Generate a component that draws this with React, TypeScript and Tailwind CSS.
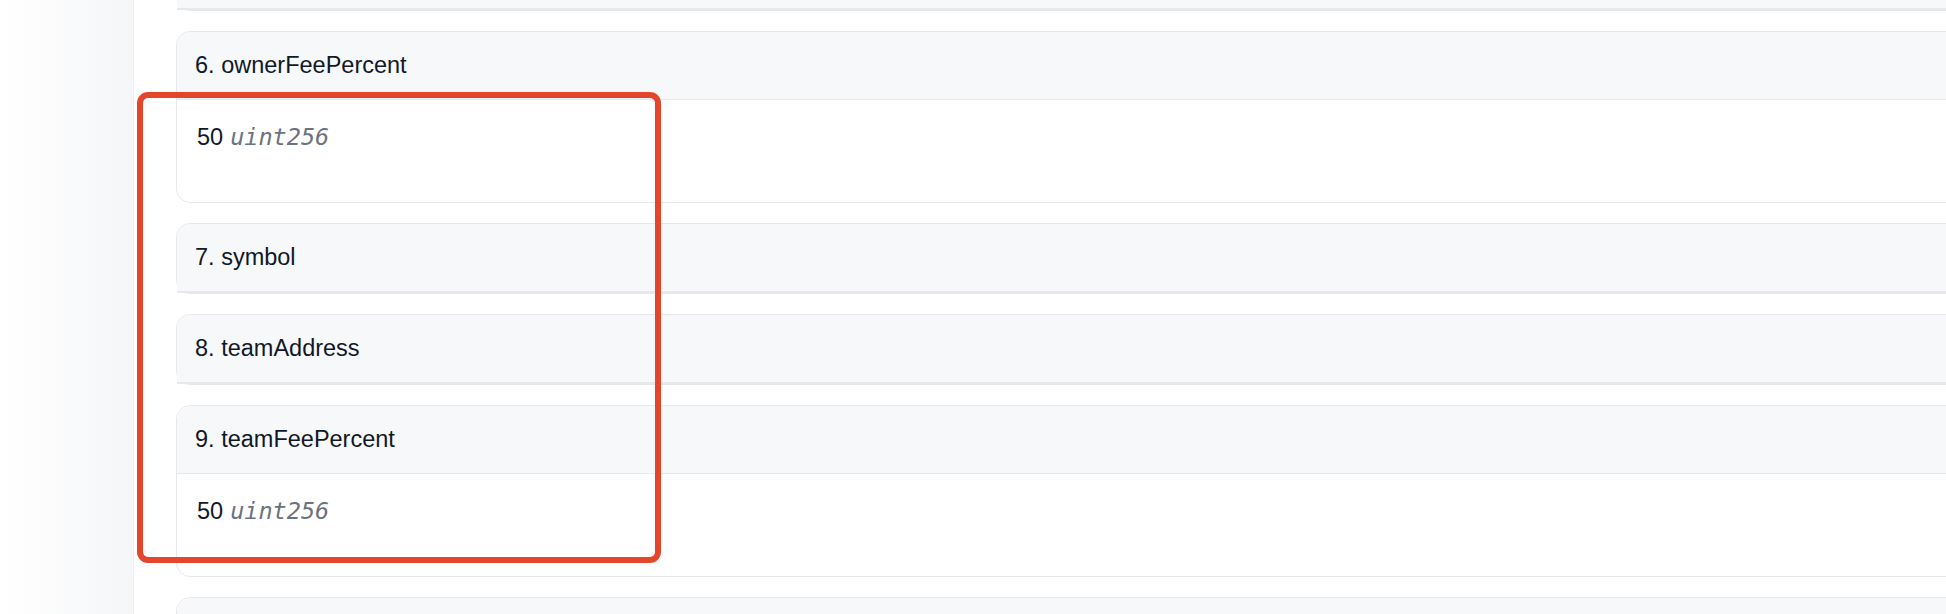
import React from "react";

type Item = { n: number; name: string; value?: string; type?: string };

const items: Item[] = [
  { n: 6, name: "ownerFeePercent", value: "50", type: "uint256" },
  { n: 7, name: "symbol" },
  { n: 8, name: "teamAddress" },
  { n: 9, name: "teamFeePercent", value: "50", type: "uint256" },
];

function Card({ item }: { item: Item }) {
  const open = item.value !== undefined;
  return (
    <div className="w-[1800px] shrink-0 rounded-[14px] border border-[#e7e8eb] bg-white">
      <div
        className={
          open
            ? "flex h-[68px] items-center rounded-t-[13px] border-b border-[#e7e8eb] bg-[#f7f8fa] px-[18px]"
            : "flex h-[69px] items-center rounded-t-[13px] border-b-2 border-[#e7e8eb] bg-[#f7f8fa] px-[18px]"
        }
      >
        <span className="text-[23.5px] text-[#111827]">
          {item.n}. {item.name}
        </span>
      </div>
      {open && (
        <div className="h-[102px] px-[20px] pt-[20px]">
          <div className="flex items-baseline leading-[1.5]">
            <span className="text-[23.5px] text-[#111827]">{item.value}</span>
            <span className="ml-[7px] font-['DejaVu_Sans_Mono',monospace] text-[23.5px] italic text-[#6b7280]">
              {item.type}
            </span>
          </div>
        </div>
      )}
    </div>
  );
}

/* Cards whose labels lie outside the visible viewport (above / below). */
function EdgeCard() {
  return (
    <div className="w-[1800px] shrink-0 rounded-[14px] border border-[#e7e8eb] bg-white">
      <div className="h-[69px] rounded-t-[13px] border-b-2 border-[#e7e8eb] bg-[#f7f8fa]" />
    </div>
  );
}

export default function App() {
  return (
    <div className="relative flex h-[614px] w-[1946px] overflow-hidden bg-white font-['Liberation_Sans',Arial,sans-serif]">
      <div className="h-full w-[134px] shrink-0 border-r border-[#eceef1] bg-gradient-to-r from-white to-[#f5f6f8]" />
      <div className="flex min-w-0 flex-1 flex-col gap-[20px] pl-[42px] -mt-[60px]">
        <EdgeCard />
        {items.map((it) => (
          <Card key={it.n} item={it} />
        ))}
        <EdgeCard />
      </div>
      <div className="pointer-events-none absolute left-[137px] top-[92px] h-[471px] w-[524px] rounded-[11px] border-[6px] border-[#e4462c]" />
    </div>
  );
}
